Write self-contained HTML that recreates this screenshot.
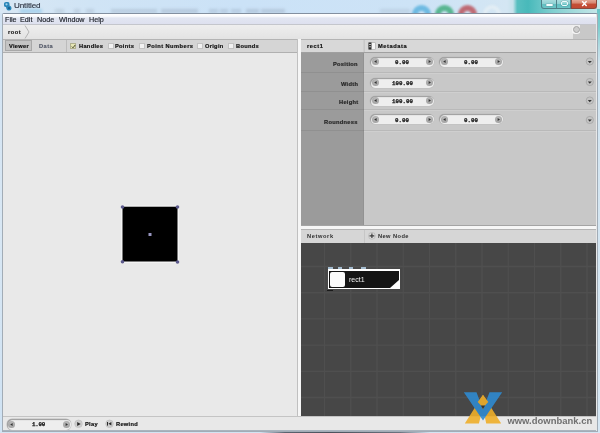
<!DOCTYPE html>
<html><head><meta charset="utf-8">
<style>
*{margin:0;padding:0;box-sizing:border-box}
html,body{width:600px;height:433px;overflow:hidden;background:#c9dff3;font-family:"Liberation Sans",sans-serif}
.a{position:absolute}
.t{position:absolute;white-space:nowrap;line-height:1;will-change:transform}
.b{font-weight:bold}
.ui{font-size:5.7px;letter-spacing:.3px;font-weight:bold;color:#111;-webkit-text-stroke:.2px currentColor}
.m{font-family:"Liberation Mono",monospace;font-weight:bold;font-size:5.8px;color:#151515;-webkit-text-stroke:.25px currentColor}
.pill{position:absolute;width:64px;height:10px;border-radius:5px;background:#eeeeee;box-shadow:inset 1px 1px 1px rgba(0,0,0,.35),0 0 0 .5px #bdbdbd}
.cir{position:absolute;width:7px;height:7px;border-radius:50%;background:radial-gradient(circle at 50% 35%,#bcbcbc,#9a9a9a)}
</style></head><body>
<!-- title bar -->
<div class="a" style="left:0;top:0;width:600px;height:14px;background:linear-gradient(90deg,#d8e7f4 0%,#d0e4f5 15%,#cbe2f7 40%,#cde3f6 70%,#d4e6f3 84.5%,#c8e2ec 85.5%,#58bfc0 86.2%,#48b9ba 88%,#7fcfd0 92%,#a6dcdd 96%,#c8e8ea 100%)"></div>

<div class="a" style="left:0;top:0;width:600px;height:13px;filter:blur(1.4px)"><div class="a" style="left:55px;top:9px;width:9px;height:4px;background:rgba(60,70,90,0.12)"></div><div class="a" style="left:74px;top:9px;width:6px;height:4px;background:rgba(60,70,90,0.13)"></div><div class="a" style="left:86px;top:9px;width:8px;height:4px;background:rgba(60,70,90,0.13)"></div><div class="a" style="left:111px;top:9px;width:46px;height:4px;background:rgba(60,70,90,0.14)"></div><div class="a" style="left:161px;top:9px;width:24px;height:4px;background:rgba(60,70,90,0.16)"></div><div class="a" style="left:185px;top:9px;width:13px;height:4px;background:rgba(60,70,90,0.16)"></div><div class="a" style="left:209px;top:9px;width:9px;height:4px;background:rgba(60,70,90,0.14)"></div><div class="a" style="left:220px;top:9px;width:8px;height:4px;background:rgba(60,70,90,0.14)"></div><div class="a" style="left:231px;top:9px;width:10px;height:4px;background:rgba(60,70,90,0.14)"></div><div class="a" style="left:246px;top:9px;width:13px;height:4px;background:rgba(60,70,90,0.16)"></div><div class="a" style="left:261px;top:9px;width:24px;height:4px;background:rgba(60,70,90,0.16)"></div><div class="a" style="left:380px;top:9px;width:30px;height:4px;background:rgba(60,70,90,0.10)"></div></div>
<div class="a" style="left:0;top:0;width:600px;height:13px;overflow:hidden">
<div class="a" style="left:412px;top:5px;width:19px;height:19px;border-radius:50%;border:6.5px solid #5ab2de;filter:blur(1.3px);opacity:.82"></div>
<div class="a" style="left:435px;top:5px;width:19px;height:19px;border-radius:50%;border:6.5px solid #3fac7c;filter:blur(1.3px);opacity:.82"></div>
<div class="a" style="left:458px;top:5px;width:19px;height:19px;border-radius:50%;border:6.5px solid #bb5058;filter:blur(1.3px);opacity:.82"></div>
<div class="a" style="left:483px;top:5px;width:18px;height:19px;border-radius:50%;border:4px solid #e2edf4;filter:blur(1.1px)"></div>
</div>
<!-- icon -->
<svg class="a" style="left:2px;top:1px" width="11" height="11" viewBox="0 0 11 11"><path d="M2 2.5 Q2 1 4 1 L6 1 Q7.5 1 7.5 3 L7.5 4.5 Q9.5 5 9.5 7 Q9.5 9.5 7 9.5 Q5 9.5 4.5 8 L4 6 Q2 6 2 4.5Z" fill="#2a86b8"/><circle cx="4.5" cy="3.3" r="1.1" fill="#9fd0ea"/><circle cx="7" cy="7.2" r="1.1" fill="#1b5f8a"/></svg>
<div class="t" style="left:14px;top:1.7px;font-size:8.1px;letter-spacing:-.12px;color:#2c3240;-webkit-text-stroke:.15px currentColor">Untitled</div>
<div class="a" style="left:20px;top:9px;width:22px;height:4px;background:rgba(120,190,230,.5);filter:blur(1.5px)"></div>
<!-- window buttons -->
<div class="a" style="left:541px;top:0;width:16px;height:9px;background:linear-gradient(#a8dcde 0,#90d2d4 45%,#62c0c2 55%,#6cc4c6 100%);border:1px solid #4e8088;border-top:none;border-radius:0 0 0 3px"></div>
<div class="a" style="left:546px;top:4.2px;width:6.5px;height:1.4px;background:#f4ffff;border-radius:1px;box-shadow:0 0 1px #245"></div>
<div class="a" style="left:556px;top:0;width:15px;height:9px;background:linear-gradient(#a8dcde 0,#90d2d4 45%,#62c0c2 55%,#6cc4c6 100%);border:1px solid #4e8088;border-top:none"></div>
<div class="a" style="left:560.5px;top:1.3px;width:7px;height:4.3px;border:1.1px solid #eefcfc;border-radius:2px;box-shadow:0 0 1px #245"></div>
<div class="a" style="left:571px;top:0;width:26px;height:9px;background:linear-gradient(#e3a694 0,#d88a74 35%,#c44e36 55%,#c24a34 100%);border:1px solid #8a4a3e;border-top:none;border-radius:0 0 3px 0"></div>
<svg class="a" style="left:580px;top:0" width="9" height="8"><path d="M2.2 1.2 L6.6 6 M6.6 1.2 L2.2 6" stroke="#fff" stroke-width="1.4"/></svg>
<div class="a" style="left:0;top:13px;width:3px;height:420px;background:linear-gradient(#d2e3f3,#d8e7f4 50%,#cfe2f3)"></div>
<div class="a" style="left:597px;top:9px;width:3px;height:424px;background:linear-gradient(#6ac6c8 0,#7ccdce 18px,#b4dbe2 38px,#d2e4f0 55px,#d6e7f4 100%)"></div>
<div class="a" style="left:0;top:430px;width:600px;height:3px;background:linear-gradient(90deg,#d2e4f3 0,#d2e4f3 260px,#5a6470 285px,#4a525c 330px,#6a7480 400px,#d2e4f3 430px,#d6e6f4 100%)"></div>
<!-- window frame -->
<div class="a" style="left:2px;top:12.5px;width:596px;height:419px;background:#e8e8e8;border:1px solid #a2acb6;border-top-color:#8390a0;border-radius:2px 2px 0 0"></div>
<!-- menubar -->
<div class="a" style="left:3px;top:13.5px;width:593px;height:10.5px;background:linear-gradient(#ffffff 0,#fafbfd 22%,#e2e6f2 40%,#dde0ef 100%)"></div>
<div class="t" style="left:5px;top:15.8px;font-size:7.2px;color:#1a1e26;-webkit-text-stroke:.15px currentColor">File</div>
<div class="t" style="left:20px;top:15.8px;font-size:7.2px;color:#1a1e26;-webkit-text-stroke:.15px currentColor">Edit</div>
<div class="t" style="left:37px;top:15.8px;font-size:7.2px;color:#1a1e26;-webkit-text-stroke:.15px currentColor">Node</div>
<div class="t" style="left:59px;top:15.8px;font-size:7.2px;color:#1a1e26;-webkit-text-stroke:.15px currentColor">Window</div>
<div class="t" style="left:89px;top:15.8px;font-size:7.2px;color:#1a1e26;-webkit-text-stroke:.15px currentColor">Help</div>
<!-- breadcrumb -->
<div class="a" style="left:3px;top:24px;width:593px;height:15px;background:linear-gradient(#eeeeee,#e3e3e3);border-top:1px solid #c4c6cc"></div>
<div class="a" style="left:572.5px;top:33px;width:23.5px;height:6px;background:#c8c8c8"></div>
<div class="a" style="left:580px;top:25px;width:16px;height:8px;background:#c8c8c8"></div>
<div class="a" style="left:572.3px;top:25.6px;width:8.2px;height:8.2px;border-radius:3px;background:#f4f4f4"></div><div class="a" style="left:572.8px;top:26.1px;width:7.2px;height:7.2px;border-radius:50%;border:1.1px solid #a4a4a4;background:#cdcdcd"></div>
<div class="t ui" style="left:8px;top:30.2px;color:#222;letter-spacing:.55px">root</div>
<svg class="a" style="left:24px;top:25px" width="7" height="14"><path d="M1 .5 L5 7 L1 13.5" fill="none" stroke="#b4b4b4" stroke-width="1"/></svg>
<!-- toolbar left -->
<div class="a" style="left:3px;top:38.5px;width:294px;height:14px;background:#d5d5d5;border-top:1px solid #b4b4b4;border-bottom:1px solid #b0b0b0"></div>
<div class="a" style="left:5px;top:40px;width:27px;height:11px;background:#c4c4c4;border:1px solid #a8a8a8"></div>
<div class="t ui" style="left:8.5px;top:43.5px">Viewer</div>
<div class="t ui" style="left:39px;top:43.5px;color:#4c5262;-webkit-text-stroke:.1px currentColor;letter-spacing:.45px">Data</div>
<div class="a" style="left:65.5px;top:39.5px;width:1px;height:12.5px;background:#bcbcbc"></div>
<div class="a" style="left:70px;top:43px;width:6px;height:6px;background:#e6e6b4;border:1px solid #b0b090"></div>
<svg class="a" style="left:71px;top:43.5px" width="5" height="5"><path d="M.8 2.6 L2 3.8 L4.2 1" fill="none" stroke="#4a4a30" stroke-width="1"/></svg>
<div class="t ui" style="left:78.5px;top:43.5px">Handles</div>
<div class="a" style="left:107.5px;top:43px;width:6px;height:6px;background:#f2f2f2;border:1px solid #c2c2c2"></div>
<div class="t ui" style="left:115px;top:43.5px">Points</div>
<div class="a" style="left:138.5px;top:43px;width:6px;height:6px;background:#f2f2f2;border:1px solid #c2c2c2"></div>
<div class="t ui" style="left:147px;top:43.5px;letter-spacing:.46px">Point Numbers</div>
<div class="a" style="left:197px;top:43px;width:6px;height:6px;background:#f2f2f2;border:1px solid #c2c2c2"></div>
<div class="t ui" style="left:205px;top:43.5px">Origin</div>
<div class="a" style="left:227.5px;top:43px;width:6px;height:6px;background:#f2f2f2;border:1px solid #c2c2c2"></div>
<div class="t ui" style="left:236px;top:43.5px">Bounds</div>
<!-- viewer canvas -->
<div class="a" style="left:3px;top:52.5px;width:294px;height:364px;background:#e9e9e9"></div>
<svg class="a" style="left:100px;top:190px" width="100" height="90">
<rect x="22" y="16.2" width="56" height="55.8" fill="none" stroke="#fff" stroke-width="1"/>
<rect x="22.5" y="16.7" width="55" height="54.8" fill="#000"/>
<circle cx="22.5" cy="17" r="1.8" fill="#5c5a8c"/>
<circle cx="77.5" cy="17" r="1.8" fill="#5c5a8c"/>
<circle cx="22.5" cy="71.8" r="1.8" fill="#5c5a8c"/>
<circle cx="77.5" cy="72" r="1.8" fill="#5c5a8c"/>
<rect x="48.5" y="43" width="3" height="3" fill="#9896c0"/>
</svg>
<!-- splitter -->
<div class="a" style="left:297px;top:38.5px;width:4px;height:378px;background:#f6f6f6;border-left:1px solid #c0c0c0"></div>
<!-- right header -->
<div class="a" style="left:301px;top:38.5px;width:295px;height:14.5px;background:#d8d8d8;border-top:1px solid #b4b4b4;border-bottom:1px solid #a0a0a0"></div>
<div class="a" style="left:364px;top:39.5px;width:1px;height:12.5px;background:#c8c8c8"></div>
<div class="a" style="left:363px;top:39.5px;width:1px;height:12.5px;background:#cfcfcf"></div>
<div class="t ui" style="left:307px;top:43.5px;letter-spacing:.6px">rect1</div>
<svg class="a" style="left:367.5px;top:42px" width="8" height="8"><rect x=".75" y=".75" width="6.5" height="6.5" fill="#f6f6f6" stroke="#9a9a9a" stroke-width=".5"/><rect x=".5" y=".5" width="3" height="7" fill="#2c2c2c"/><rect x="1" y="2.2" width="2" height=".8" fill="#d8d8d8"/><rect x="1" y="4.4" width="2" height=".8" fill="#d8d8d8"/></svg>
<div class="t ui" style="left:377.5px;top:43.5px;letter-spacing:.58px">Metadata</div>
<!-- params -->
<div class="a" style="left:301px;top:53px;width:295px;height:172.5px;background:#c8c8c8"></div>
<div class="a" style="left:301px;top:53px;width:62.5px;height:172.5px;background:#9b9b9b;border-right:1px solid #929292"></div>
<div class="a" style="left:301px;top:71.5px;width:295px;height:1px;background:rgba(0,0,0,.07)"></div><div class="a" style="left:364px;top:72.5px;width:232px;height:1px;background:rgba(255,255,255,.14)"></div>
<div class="a" style="left:301px;top:91px;width:295px;height:1px;background:rgba(0,0,0,.07)"></div><div class="a" style="left:364px;top:92px;width:232px;height:1px;background:rgba(255,255,255,.14)"></div>
<div class="a" style="left:301px;top:109px;width:295px;height:1px;background:rgba(0,0,0,.07)"></div><div class="a" style="left:364px;top:110px;width:232px;height:1px;background:rgba(255,255,255,.14)"></div>
<div class="a" style="left:301px;top:130px;width:295px;height:1px;background:rgba(0,0,0,.07)"></div><div class="a" style="left:364px;top:131px;width:232px;height:1px;background:rgba(255,255,255,.14)"></div>
<div class="t ui" style="right:242px;top:61.8px;color:#262626">Position</div>
<div class="t ui" style="right:242px;top:81.8px;color:#262626">Width</div>
<div class="t ui" style="right:242px;top:99.8px;color:#262626">Height</div>
<div class="t ui" style="right:242px;top:119.9px;color:#262626">Roundness</div>
<!-- pills -->
<div class="pill" style="left:370px;top:56.5px"></div>
<div class="pill" style="left:439px;top:56.5px"></div>
<div class="pill" style="left:370px;top:77.5px"></div>
<div class="pill" style="left:370px;top:95.5px"></div>
<div class="pill" style="left:370px;top:114px"></div>
<div class="pill" style="left:439px;top:114px"></div>
<div class="t m" style="left:395px;top:59.7px">0.00</div>
<div class="t m" style="left:464px;top:59.7px">0.00</div>
<div class="t m" style="left:391.7px;top:80.9px">100.00</div>
<div class="t m" style="left:391.7px;top:99.4px">100.00</div>
<div class="t m" style="left:395px;top:117.7px">0.00</div>
<div class="t m" style="left:464px;top:117.7px">0.00</div>
<!-- dropdowns -->
<svg class="a" style="left:584px;top:56px" width="12" height="80">
<g fill="#c4c4c4" stroke="#a4a4a4" stroke-width=".8">
<circle cx="5.8" cy="5.5" r="3.6"/><circle cx="5.8" cy="26" r="3.6"/><circle cx="5.8" cy="44.5" r="3.6"/><circle cx="5.8" cy="64" r="3.6"/></g>
<g fill="#333"><path d="M3.8 5 L7.8 5 L5.8 7.3Z"/><path d="M3.8 25.5 L7.8 25.5 L5.8 27.8Z"/><path d="M3.8 44 L7.8 44 L5.8 46.3Z"/><path d="M3.8 63.5 L7.8 63.5 L5.8 65.8Z"/></g>
</svg>
<!-- network header -->
<div class="a" style="left:301px;top:225px;width:295px;height:5px;background:#f6f6f6;border-top:1px solid #a4a4a4;border-bottom:1px solid #b4b4b4"></div>
<div class="a" style="left:301px;top:230px;width:295px;height:13px;background:#d6d6d6"></div>
<div class="a" style="left:364px;top:230px;width:1px;height:13px;background:#c6c6c6"></div>
<div class="t ui" style="left:307px;top:234.4px;color:#2e2e2e;-webkit-text-stroke:0;letter-spacing:.6px">Network</div>
<svg class="a" style="left:367.5px;top:232px" width="8" height="8"><circle cx="3.9" cy="3.8" r="3.4" fill="#dcdcdc" stroke="#a6a6a6" stroke-width=".5"/><path d="M3.9 1.5 V6.1 M1.5 3.8 H6.3" stroke="#3a3a3a" stroke-width="1.2"/></svg>
<div class="t ui" style="left:378px;top:234.4px;color:#2e2e2e;-webkit-text-stroke:0;letter-spacing:.42px">New Node</div>
<!-- network -->
<div class="a" style="left:301px;top:243px;width:295px;height:173px;background:#474747"></div>
<svg class="a" style="left:301px;top:243px" width="295" height="173"><line x1="23.5" y1="0" x2="23.5" y2="173" stroke="#4f4f4f" stroke-width="1.35"/><line x1="49.75" y1="0" x2="49.75" y2="173" stroke="#4f4f4f" stroke-width="1.35"/><line x1="76" y1="0" x2="76" y2="173" stroke="#4f4f4f" stroke-width="1.35"/><line x1="102.25" y1="0" x2="102.25" y2="173" stroke="#4f4f4f" stroke-width="1.35"/><line x1="128.5" y1="0" x2="128.5" y2="173" stroke="#4f4f4f" stroke-width="1.35"/><line x1="154.75" y1="0" x2="154.75" y2="173" stroke="#4f4f4f" stroke-width="1.35"/><line x1="181" y1="0" x2="181" y2="173" stroke="#4f4f4f" stroke-width="1.35"/><line x1="207.25" y1="0" x2="207.25" y2="173" stroke="#4f4f4f" stroke-width="1.35"/><line x1="233.5" y1="0" x2="233.5" y2="173" stroke="#4f4f4f" stroke-width="1.35"/><line x1="259.75" y1="0" x2="259.75" y2="173" stroke="#4f4f4f" stroke-width="1.35"/><line x1="286" y1="0" x2="286" y2="173" stroke="#4f4f4f" stroke-width="1.35"/><line x1="0" y1="23.5" x2="295" y2="23.5" stroke="#4f4f4f" stroke-width="1.35"/><line x1="0" y1="49.7" x2="295" y2="49.7" stroke="#4f4f4f" stroke-width="1.35"/><line x1="0" y1="75.9" x2="295" y2="75.9" stroke="#4f4f4f" stroke-width="1.35"/><line x1="0" y1="102.1" x2="295" y2="102.1" stroke="#4f4f4f" stroke-width="1.35"/><line x1="0" y1="128.3" x2="295" y2="128.3" stroke="#4f4f4f" stroke-width="1.35"/><line x1="0" y1="154.5" x2="295" y2="154.5" stroke="#4f4f4f" stroke-width="1.35"/></svg>
<!-- node -->
<div class="a" style="left:328px;top:269px;width:72px;height:20px;background:#fff"></div>
<svg class="a" style="left:329px;top:271px" width="70" height="17"><path d="M0 0 H70 V9 L61 17 H0Z" fill="#141414"/></svg>
<div class="a" style="left:330px;top:272px;width:14.7px;height:14.5px;background:#fafafa;border-radius:2px"></div>
<div class="t" style="left:348.5px;top:276px;font-size:7px;color:#f0f0f0">rect1</div>
<div class="a" style="left:328px;top:267.3px;width:5px;height:1.3px;background:#a4bcd0"></div>
<div class="a" style="left:337.5px;top:267.3px;width:4.5px;height:1.3px;background:#a4bcd0"></div>
<div class="a" style="left:348.5px;top:267.3px;width:4.5px;height:1.3px;background:#a4bcd0"></div>
<div class="a" style="left:360.5px;top:267.3px;width:5px;height:1.3px;background:#a4bcd0"></div>
<div class="a" style="left:327px;top:289.5px;width:6px;height:1.2px;background:#1a1a1a"></div>
<!-- bottom bar -->
<div class="a" style="left:3px;top:416px;width:593px;height:14.5px;background:#e8e8e8;border-top:1px solid #c4c4c4;border-bottom:1px solid #aab4be"></div>
<div class="pill" style="left:6.5px;top:419px;width:64px;height:10.5px"></div>
<div class="t m" style="left:31.5px;top:422.3px;letter-spacing:-.2px">1.00</div>
<div class="t ui" style="left:85px;top:422px">Play</div>
<div class="t ui" style="left:116px;top:422px">Rewind</div>
<div class="cir" style="left:371.5px;top:58px"></div><svg class="a" style="left:371.5px;top:58px" width="7" height="7"><path d="M4.6 1.9 L2.2 3.5 L4.6 5.1Z" fill="#333"/></svg>
<div class="cir" style="left:426px;top:58px"></div><svg class="a" style="left:426px;top:58px" width="7" height="7"><path d="M2.6 1.9 L5 3.5 L2.6 5.1Z" fill="#333"/></svg>
<div class="cir" style="left:440.5px;top:58px"></div><svg class="a" style="left:440.5px;top:58px" width="7" height="7"><path d="M4.6 1.9 L2.2 3.5 L4.6 5.1Z" fill="#333"/></svg>
<div class="cir" style="left:495px;top:58px"></div><svg class="a" style="left:495px;top:58px" width="7" height="7"><path d="M2.6 1.9 L5 3.5 L2.6 5.1Z" fill="#333"/></svg>
<div class="cir" style="left:371.5px;top:78.5px"></div><svg class="a" style="left:371.5px;top:78.5px" width="7" height="7"><path d="M4.6 1.9 L2.2 3.5 L4.6 5.1Z" fill="#333"/></svg>
<div class="cir" style="left:426px;top:78.5px"></div><svg class="a" style="left:426px;top:78.5px" width="7" height="7"><path d="M2.6 1.9 L5 3.5 L2.6 5.1Z" fill="#333"/></svg>
<div class="cir" style="left:371.5px;top:97.2px"></div><svg class="a" style="left:371.5px;top:97.2px" width="7" height="7"><path d="M4.6 1.9 L2.2 3.5 L4.6 5.1Z" fill="#333"/></svg>
<div class="cir" style="left:426px;top:97.2px"></div><svg class="a" style="left:426px;top:97.2px" width="7" height="7"><path d="M2.6 1.9 L5 3.5 L2.6 5.1Z" fill="#333"/></svg>
<div class="cir" style="left:371.5px;top:115.8px"></div><svg class="a" style="left:371.5px;top:115.8px" width="7" height="7"><path d="M4.6 1.9 L2.2 3.5 L4.6 5.1Z" fill="#333"/></svg>
<div class="cir" style="left:426px;top:115.8px"></div><svg class="a" style="left:426px;top:115.8px" width="7" height="7"><path d="M2.6 1.9 L5 3.5 L2.6 5.1Z" fill="#333"/></svg>
<div class="cir" style="left:440.5px;top:115.8px"></div><svg class="a" style="left:440.5px;top:115.8px" width="7" height="7"><path d="M4.6 1.9 L2.2 3.5 L4.6 5.1Z" fill="#333"/></svg>
<div class="cir" style="left:495px;top:115.8px"></div><svg class="a" style="left:495px;top:115.8px" width="7" height="7"><path d="M2.6 1.9 L5 3.5 L2.6 5.1Z" fill="#333"/></svg>
<div class="cir" style="left:7.8px;top:420.8px"></div><svg class="a" style="left:7.8px;top:420.8px" width="7" height="7"><path d="M4.6 1.9 L2.2 3.5 L4.6 5.1Z" fill="#333"/></svg>
<div class="cir" style="left:62.5px;top:420.8px"></div><svg class="a" style="left:62.5px;top:420.8px" width="7" height="7"><path d="M2.6 1.9 L5 3.5 L2.6 5.1Z" fill="#333"/></svg>
<!-- play/rewind icons -->
<svg class="a" style="left:74px;top:419px" width="42" height="9"><circle cx="4.5" cy="4.8" r="3.8" fill="#cdcdcd" stroke="#bababa" stroke-width=".6"/><path d="M3.2 2.9 L6.7 4.9 L3.2 6.9Z" fill="#2a2a2a"/><circle cx="35.5" cy="4.8" r="3.8" fill="#cdcdcd" stroke="#bababa" stroke-width=".6"/><path d="M33.5 3 V6.6" stroke="#2a2a2a" stroke-width="1"/><path d="M37.4 3 L34.4 4.8 L37.4 6.6Z" fill="#2a2a2a"/></svg>
<!-- watermark -->
<svg class="a" style="left:0;top:0" width="600" height="433">
<g opacity=".9">
<path d="M464.8 423.4 L501.2 423.4 L483 394.7Z M478.9 423.4 L486.2 423.4 L483 407.8Z" fill="#efae2a" fill-rule="evenodd"/>
<path d="M463.8 392.3 L502.2 392.3 L483 420.5Z M476.5 392.3 L489.5 392.3 L483 409.5Z" fill="#2f8ad0" fill-rule="evenodd"/>
<path d="M483 395 L488.3 402 L483 407.5 L477.7 402Z" fill="#efae2a"/>
<path d="M480.8 405.5 L485.2 405.5 L483 409Z" fill="#333"/>
</g>
<text x="507.4" y="423.6" font-family="Liberation Sans" font-weight="bold" font-size="8.4" fill="#707070" textLength="84.8" lengthAdjust="spacingAndGlyphs">www.downbank.cn</text>
</svg>

</body></html>
